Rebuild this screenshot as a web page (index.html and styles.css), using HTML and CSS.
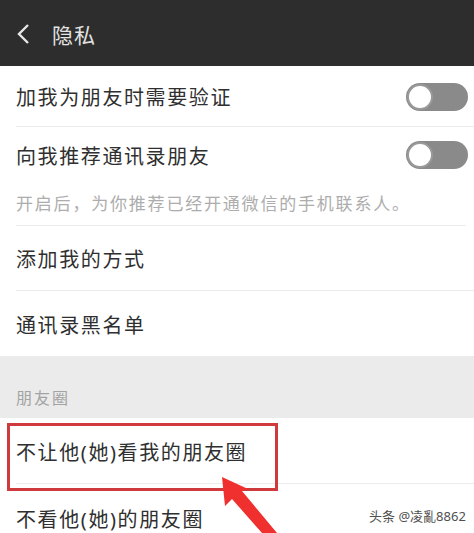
FILE: index.html
```html
<!DOCTYPE html>
<html>
    <head>
        <meta charset="utf-8" />
        <title>隐私</title>
        <link rel="stylesheet" href="styles.css">
    </head>

    <body>
        <div class="page">
            <!-- 顶部栏 -->
            <div class="topbar">
                <svg class="back" width="16" height="22" viewBox="0 0 16 22">
                    <path d="M12 2 L3 11 L12 20" fill="none" stroke="#e6e6e6" stroke-width="2.4" />
                </svg>
                <span class="title">隐私</span>
            </div>

            <div class="row row-first">
                <span class="label">加我为朋友时需要验证</span>
                <div class="switch"><div class="knob"></div></div>
            </div>
            <div class="row row-second">
                <span class="label">向我推荐通讯录朋友</span>
                <div class="switch"><div class="knob"></div></div>
            </div>
            <div class="hint">开启后，为你推荐已经开通微信的手机联系人。</div>
            <div class="row row-plain">
                <span class="label">添加我的方式</span>
            </div>
            <div class="row row-plain no-line">
                <span class="label">通讯录黑名单</span>
            </div>

            <div class="section">朋友圈</div>

            <div class="row row-moments">
                <span class="label">不让他(她)看我的朋友圈</span>
            </div>
            <div class="row row-last no-line">
                <span class="label">不看他(她)的朋友圈</span>
            </div>

            <!-- 标注 -->
            <div class="mark"></div>
            <svg class="arrow" width="80" height="73" viewBox="0 0 80 73">
                <polygon points="22,17 25,46 32,39 62,73 77,73 42,31 48,29" fill="#f0302e" />
            </svg>
            <div class="watermark">头条 @凌亂8862</div>
        </div>
    </body>
</html>
```

FILE: styles.css
```css
body {
    margin: 0;
    background: #ffffff;
    font-family: "Noto Sans", "Noto Sans CJK SC", sans-serif;
}

.page {
    position: relative;
    width: 474px;
    height: 533px;
    overflow: hidden;
    background: #ffffff;
}

.topbar {
    height: 66px;
    background: #2d2d2d;
    display: flex;
    align-items: center;
    padding-left: 16px;
    padding-top: 2px;
    box-sizing: border-box;
}

.back {
    margin-right: 20px;
}

.title {
    color: #e2e2e2;
    font-size: 21px;
    letter-spacing: 1px;
}

.row {
    display: flex;
    align-items: center;
    justify-content: space-between;
    margin-left: 16px;
    padding-right: 6px;
    border-bottom: 1px solid #ececec;
    box-sizing: border-box;
}

.no-line {
    border-bottom: none;
}

.label {
    color: #2f2f2f;
    font-size: 20px;
    letter-spacing: 1.6px;
}

.row-first {
    height: 61px;
    padding-top: 1px;
}

.row-second {
    height: 54px;
    border-bottom: none;
    padding-top: 2px;
}

.hint {
    height: 45px;
    margin-left: 16px;
    margin-right: 8px;
    color: #adadad;
    font-size: 17px;
    letter-spacing: 1.8px;
    border-bottom: 1px solid #ececec;
    box-sizing: border-box;
    padding-top: 9px;
}

.row-plain {
    height: 65px;
    padding-top: 1px;
}

.section {
    height: 62px;
    background: #ebebeb;
    color: #a3a3a3;
    font-size: 16px;
    letter-spacing: 2px;
    padding-left: 16px;
    padding-top: 29px;
    box-sizing: border-box;
}

.row-moments {
    height: 66px;
    padding-top: 2px;
}

.row-last {
    height: 60px;
    padding-top: 8px;
}

.switch {
    position: relative;
    width: 62px;
    height: 28px;
    border-radius: 14px;
    background: #8a8a8a;
}

.knob {
    position: absolute;
    left: 1px;
    top: 1px;
    width: 22px;
    height: 22px;
    border-radius: 50%;
    background: #ffffff;
    border: 2px solid #9a9a9a;
}

.mark {
    position: absolute;
    left: 7px;
    top: 423px;
    width: 271px;
    height: 68px;
    border: 3px solid #cf3a3c;
    box-sizing: border-box;
}

.arrow {
    position: absolute;
    left: 200px;
    top: 460px;
}

.watermark {
    position: absolute;
    left: 369px;
    top: 506px;
    color: #505050;
    font-size: 13px;
}
```
